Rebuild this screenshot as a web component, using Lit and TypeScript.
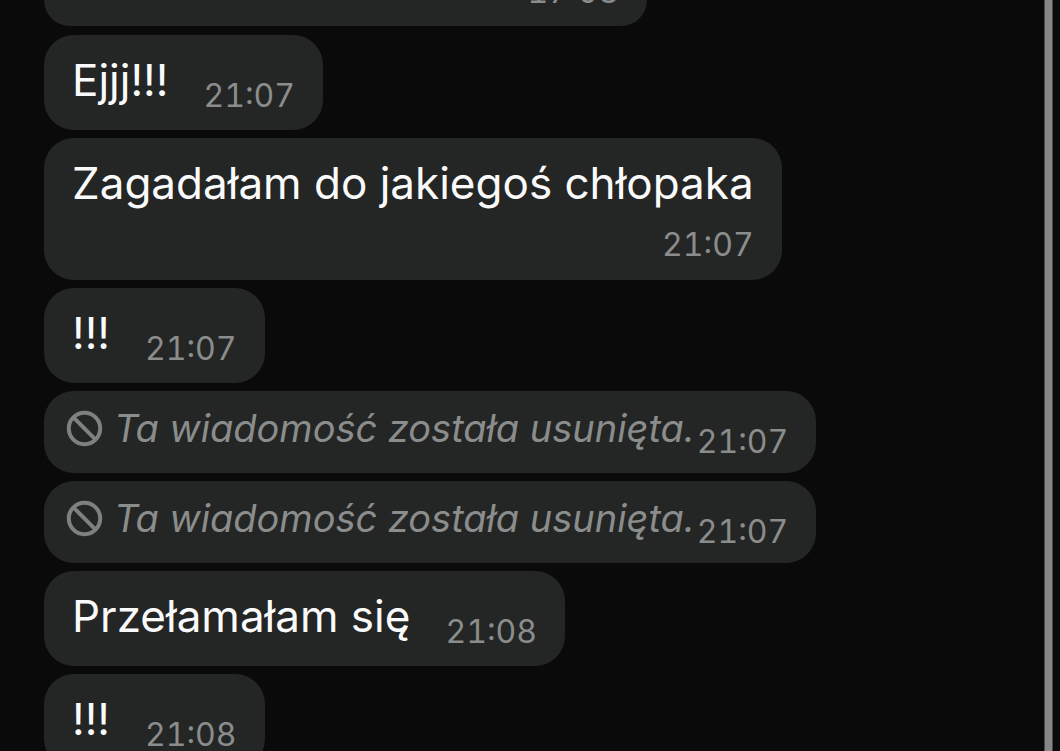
import { LitElement, html, css, nothing } from "lit";
import { customElement } from "lit/decorators.js";

interface Message {
  text: string;
  time: string;
  kind: "first" | "inline" | "stacked" | "deleted";
}

const messages: Message[] = [
  { text: "", time: "17:08", kind: "first" },
  { text: "Ejjj!!!", time: "21:07", kind: "inline" },
  { text: "Zagadałam do jakiegoś chłopaka", time: "21:07", kind: "stacked" },
  { text: "!!!", time: "21:07", kind: "inline" },
  { text: "Ta wiadomość została usunięta.", time: "21:07", kind: "deleted" },
  { text: "Ta wiadomość została usunięta.", time: "21:07", kind: "deleted" },
  { text: "Przełamałam się", time: "21:08", kind: "inline" },
  { text: "!!!", time: "21:08", kind: "inline" },
];

@customElement("app-root")
export class AppRoot extends LitElement {
  static styles = css`
    :host {
      display: flex;
      height: 100vh;
      overflow: hidden;
      background: #0a0a0a;
      color: #fafafa;
      font-family: Inter, "Noto Sans", sans-serif;
    }
    .thread {
      flex: 1;
      display: flex;
      flex-direction: column;
      align-items: flex-start;
      gap: 8px;
      padding-left: 44px;
    }
    .bubble {
      flex: none;
      box-sizing: border-box;
      display: flex;
      background: #242625;
      border-radius: 30px;
      padding: 0 28px;
      white-space: nowrap;
    }
    .text {
      font-size: 44px;
      line-height: 56px;
    }
    time {
      font-size: 32px;
      line-height: 40px;
      font-variant-numeric: tabular-nums;
      color: #8b8d8c;
    }
    .inline {
      height: 95px;
      padding-top: 17px;
      gap: 35px;
    }
    .inline time {
      padding-top: 24px;
    }
    .stacked {
      height: 142px;
      flex-direction: column;
      padding-top: 17px;
      gap: 14px;
    }
    .stacked time {
      align-self: flex-end;
    }
    .deleted {
      height: 82px;
      padding: 9px 28px 0 22px;
    }
    .deleted .text {
      font-size: 38px;
      font-style: italic;
      color: #8b8d8c;
      margin-left: 11px;
      margin-right: 2px;
    }
    .deleted time {
      padding-top: 22px;
    }
    .deleted svg {
      width: 37px;
      height: 37px;
      margin-top: 10px;
    }
    .first {
      width: 603px;
      height: 26px;
      margin-bottom: 1px;
      justify-content: flex-end;
      align-items: flex-end;
      border-radius: 0 0 30px 30px;
      overflow: hidden;
      padding-bottom: 14px;
    }
    .edge {
      box-sizing: border-box;
      width: 9px;
      margin-right: 7px;
      background: #868686;
      border: solid #4a4a4a;
      border-width: 0 1px;
    }
  `;

  private bubble(m: Message) {
    return html`<article class="bubble ${m.kind}">
      ${m.kind === "deleted"
        ? html`<svg viewBox="0 0 37 37" fill="none" stroke="#7f8180" stroke-width="4" aria-hidden="true">
            <circle cx="18.5" cy="18.5" r="15.7" />
            <path d="M7.4 7.4 29.6 29.6" />
          </svg>`
        : nothing}
      ${m.text ? html`<span class="text">${m.text}</span>` : nothing}
      <time>${m.time}</time>
    </article>`;
  }

  render() {
    return html`<main class="thread">${messages.map((m) => this.bubble(m))}</main>
      <div class="edge"></div>`;
  }
}
